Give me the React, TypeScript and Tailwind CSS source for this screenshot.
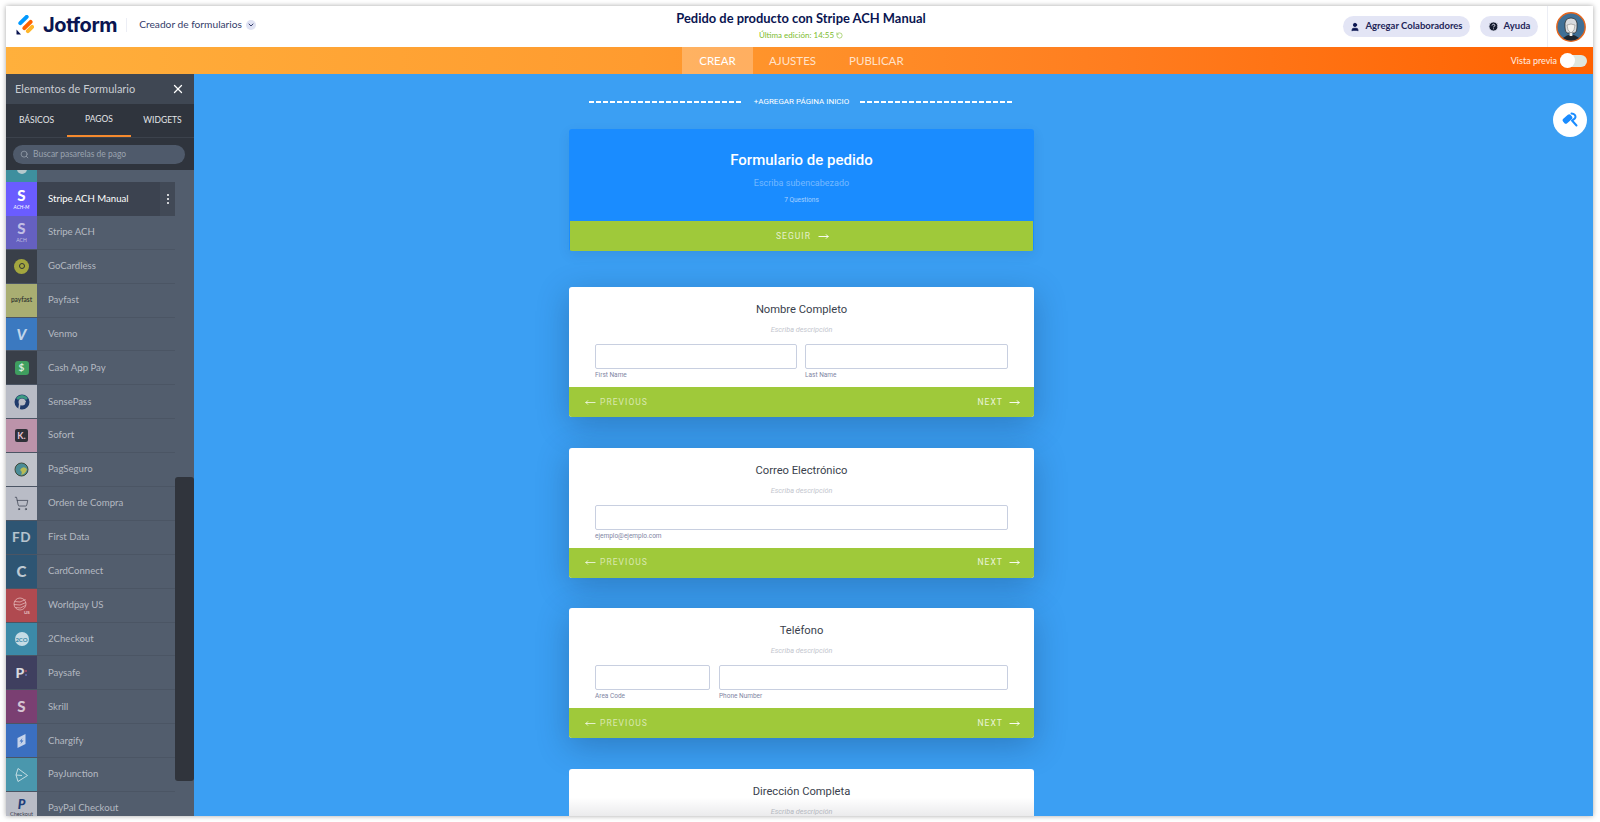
import React from "react";
import { ChevronDown, CircleHelp, MoveLeft, MoveRight, RotateCcw, Search, ShoppingCart, User, X } from "lucide-react";

const headerFont = "font-['Lato','Noto_Sans',sans-serif]";

function Logo() {
  return (
    <svg width="18" height="20" viewBox="0 0 18 20" aria-hidden>
      <rect x="5.5" y="-1.5" width="4" height="13" rx="2" transform="rotate(45 7.5 5)" fill="#0099ff" />
      <rect x="9.5" y="3.5" width="4" height="13" rx="2" transform="rotate(45 11.5 10)" fill="#ff6100" />
      <rect x="12" y="9" width="4" height="10" rx="2" transform="rotate(45 14 14)" fill="#ffb629" />
      <path d="M0.5 14.5 L0.5 19 Q0.5 19.5 1 19.5 L5 19.5 Z" fill="#0a1551" />
    </svg>
  );
}

function Avatar() {
  return (
    <svg width="30" height="30" viewBox="0 0 30 30" aria-hidden>
      <circle cx="15" cy="15" r="14.2" fill="#3f6f96" stroke="#e8651a" strokeWidth="1.4" />
      <path d="M7 26 Q15 19 23 26 Q15 31 7 26Z" fill="#1d2630" />
      <path d="M9 15 Q8 6 15 6 Q22 6 21 15 Q21 20 19 21 L11 21 Q9 20 9 15Z" fill="#d8dade" stroke="#222" strokeWidth="0.7" />
      <path d="M11 13 Q11 19 15 21 Q19 19 19 13 Q15 11 11 13Z" fill="#f3f1ee" stroke="#555" strokeWidth="0.4" />
      <rect x="13.6" y="21" width="2.8" height="3" fill="#efeeea" />
    </svg>
  );
}

function Roller() {
  return (
    <svg width="18" height="18" viewBox="0 0 18 18" aria-hidden>
      <rect x="1.5" y="5" width="10" height="6" rx="2" transform="rotate(-40 6.5 8)" fill="#1a8cff" />
      <path d="M10.5 2.5 Q14.5 3 14.5 6 Q14.5 7.5 11 9.5 L15.5 14.5" fill="none" stroke="#1a8cff" strokeWidth="2" strokeLinecap="round" strokeLinejoin="round" />
    </svg>
  );
}

function Letter({ text, className = "text-white/70" }: { text: string; className?: string }) {
  return <span className={`font-['Lato',sans-serif] font-black leading-none ${className}`}>{text}</span>;
}

function Ring({ className }: { className: string }) {
  return <span className={`block rounded-full ${className}`} />;
}

const gateways: { name: string; bg: string; icon: React.ReactNode }[] = [
  {
    name: "Stripe ACH",
    bg: "bg-[#6560c0]",
    icon: (
      <span className="flex flex-col items-center gap-[1px]">
        <Letter text="S" className="text-[15px] text-white/60" />
        <span className="text-[5px] leading-[6px] text-white/60 font-['Lato',sans-serif]">ACH</span>
      </span>
    ),
  },
  {
    name: "GoCardless",
    bg: "bg-[#393f49]",
    icon: (
      <span className="flex h-[15px] w-[15px] items-center justify-center rounded-full bg-[#a3a63f]">
        <Ring className="h-[6px] w-[6px] border border-[#30343a]" />
      </span>
    ),
  },
  {
    name: "Payfast",
    bg: "bg-[#a9ae72]",
    icon: <span className="font-['Lato',sans-serif] text-[6.5px] font-bold text-[#3b3f35]">payfast</span>,
  },
  {
    name: "Venmo",
    bg: "bg-[#3b79c0]",
    icon: <Letter text="V" className="text-[15px] italic text-white/70" />,
  },
  {
    name: "Cash App Pay",
    bg: "bg-[#393f49]",
    icon: (
      <span className="flex h-[14px] w-[14px] items-center justify-center rounded-[3px] bg-[#3f9e5f] font-['Lato',sans-serif] text-[10px] font-bold text-white/80">
        $
      </span>
    ),
  },
  {
    name: "SensePass",
    bg: "bg-[#b9bcc6]",
    icon: (
      <svg width="16" height="16" viewBox="0 0 16 16" fill="none" aria-hidden>
        <circle cx="8" cy="8" r="5.5" stroke="#1f3a6b" strokeWidth="4" />
        <path d="M3 5 Q8 0 13 5" stroke="#3c9a82" strokeWidth="2.6" />
        <path d="M6.5 6 L5 15" stroke="#b9bcc6" strokeWidth="1.6" />
        <path d="M9.5 6 L11.5 8" stroke="#b9bcc6" strokeWidth="1.6" />
      </svg>
    ),
  },
  {
    name: "Sofort",
    bg: "bg-[#bc93aa]",
    icon: (
      <span className="flex h-[13px] w-[13px] items-center justify-center rounded-[2px] bg-[#2f3038] font-['Lato',sans-serif] text-[9px] font-bold text-[#e3c3d3]">
        K.
      </span>
    ),
  },
  {
    name: "PagSeguro",
    bg: "bg-[#c0c3cb]",
    icon: (
      <svg width="15" height="15" viewBox="0 0 15 15" aria-hidden>
        <circle cx="7.5" cy="7.5" r="6.5" fill="#4b8c96" stroke="#3d4a3a" strokeWidth="1" />
        <path d="M6 8 Q9 3 13 7 Q12 12 7 13 Q9 10 6 8Z" fill="#b7bb55" />
      </svg>
    ),
  },
  {
    name: "Orden de Compra",
    bg: "bg-[#b9bcc6]",
    icon: <ShoppingCart size={15} strokeWidth={1.2} className="text-[#3b4250]" />,
  },
  { name: "First Data", bg: "bg-[#2e5573]", icon: <span className="font-['Lato',sans-serif] text-[13.5px] font-bold leading-none tracking-[0.5px] text-white/65">FD</span> },
  { name: "CardConnect", bg: "bg-[#2e5573]", icon: <Letter text="C" className="text-[15px] text-white/70" /> },
  {
    name: "Worldpay US",
    bg: "bg-[#b04a50]",
    icon: (
      <svg width="19" height="19" viewBox="0 0 19 19" fill="none" stroke="#e9c6c6" strokeWidth="0.7" aria-hidden>
        <circle cx="8" cy="8" r="6" />
        <path d="M2.5 5.5 Q8 7.5 13.5 3.5 M2 8.5 Q8 10.5 14 6.5 M3.5 11.5 Q8 13.5 13.5 9.5" />
        <text x="12" y="18" fontSize="4.5" fontWeight="700" fill="#e9c6c6" stroke="none">US</text>
      </svg>
    ),
  },
  {
    name: "2Checkout",
    bg: "bg-[#3c8aa8]",
    icon: (
      <span className="flex h-[14px] w-[14px] items-center justify-center rounded-full bg-white/70 font-['Lato',sans-serif] text-[6px] font-bold text-[#3c8aa8]">
        2CO
      </span>
    ),
  },
  {
    name: "Paysafe",
    bg: "bg-[#3f3f5f]",
    icon: (
      <span className="flex items-center gap-[1px]">
        <Letter text="P" className="text-[14px] text-white/80" />
        <span className="flex flex-col gap-[2px]">
          <Ring className="h-[2px] w-[2px] bg-[#b0506a]" />
          <Ring className="h-[2px] w-[2px] bg-[#6a70b0]" />
        </span>
      </span>
    ),
  },
  { name: "Skrill", bg: "bg-[#7a3f72]", icon: <Letter text="S" className="text-[15px] text-white/70" /> },
  {
    name: "Chargify",
    bg: "bg-[#3b6fc0]",
    icon: (
      <svg width="9" height="14" viewBox="0 0 9 14" aria-hidden>
        <path d="M0.5 4 L8.5 0 L8.5 10 L0.5 14Z" fill="#c5d3ea" />
        <path d="M5.5 4 L2.5 7.5 L4.5 7.5 L3.5 10 L6.5 6.5 L4.5 6.5Z" fill="#3b6fc0" />
      </svg>
    ),
  },
  {
    name: "PayJunction",
    bg: "bg-[#4a97ad]",
    icon: (
      <svg width="15" height="16" viewBox="0 0 15 16" fill="none" stroke="#cfe3e8" strokeWidth="0.9" aria-hidden>
        <path d="M2 8 L4 1.5 L13.5 8.5 L4 14.5 L2 8 L8 8.5" strokeLinejoin="round" />
      </svg>
    ),
  },
  {
    name: "PayPal Checkout",
    bg: "bg-[#b9bcc6]",
    icon: (
      <span className="flex flex-col items-center">
        <span className="font-['Lato',sans-serif] text-[13px] font-black italic leading-none text-[#1f3f7a]">P</span>
        <span className="font-['Lato',sans-serif] text-[5.5px] leading-[7px] text-[#3b4250]">Checkout</span>
      </span>
    ),
  },
];

function GatewayRow({ name, bg, icon }: { name: string; bg: string; icon: React.ReactNode }) {
  return (
    <div className="flex h-[33.9px] shrink-0 items-center border-b border-[#4b5564]">
      <div className={`flex h-full w-[31px] shrink-0 items-center justify-center overflow-hidden ${bg}`}>{icon}</div>
      <span className={`pl-[11px] text-[9.6px] text-[#b4b9c1] ${headerFont}`}>{name}</span>
    </div>
  );
}

function Sidebar() {
  return (
    <aside className={`flex h-full w-[188px] shrink-0 flex-col overflow-hidden bg-[#525d6d] ${headerFont}`}>
      <div className="flex h-[30px] shrink-0 items-center justify-between bg-[#3f4753] pl-[9px] pr-[9px]">
        <span className="text-[11px] text-[#c9ccd2]">Elementos de Formulario</span>
        <X size={14} strokeWidth={2.2} className="text-white" />
      </div>
      <div className="flex h-[34px] shrink-0 border-b border-[#3c424c] bg-[#2f343d] text-[8.5px] text-[#e3e5e8]">
        <div className="flex w-[61px] items-center justify-center">BÁSICOS</div>
        <div className="flex w-[64px] items-center justify-center border-b-2 border-[#f58a2e]">PAGOS</div>
        <div className="flex flex-1 items-center justify-center">WIDGETS</div>
      </div>
      <div className="flex h-[32px] shrink-0 items-center bg-[#2f343d] px-[7px]">
        <div className="flex h-[19px] w-[172px] items-center gap-[4px] rounded-full bg-[#4f5a6b] pl-[7px] text-[8.5px] text-[#9aa3af]">
          <Search size={9} />
          Buscar pasarelas de pago
        </div>
      </div>
      <div className="flex min-h-0 flex-1">
        <div className="flex w-[169px] shrink-0 flex-col overflow-hidden">
          <div className="flex h-[12px] shrink-0 items-end justify-start bg-[#525d6d]">
            <div className="flex h-full w-[31px] items-start justify-center overflow-hidden bg-[#3e8f9e]">
              <Ring className="h-[5px] w-[10px] -translate-y-[1px] rounded-t-none bg-[#b5c9cd]" />
            </div>
          </div>
          <div className="flex h-[33.9px] shrink-0 items-center bg-[#3c4350]">
            <div className="flex h-full w-[31px] shrink-0 flex-col items-center justify-center gap-[1px] bg-[#6a5cff]">
              <Letter text="S" className="text-[15px] text-white" />
              <span className="font-['Lato',sans-serif] text-[5px] italic leading-[6px] text-white">ACH-M</span>
            </div>
            <span className="flex-1 pl-[11px] text-[9.6px] text-white">Stripe ACH Manual</span>
            <div className="flex h-full w-[15px] flex-col items-center justify-center gap-[2px] bg-[#414956]">
              <Ring className="h-[2px] w-[2px] bg-white" />
              <Ring className="h-[2px] w-[2px] bg-white" />
              <Ring className="h-[2px] w-[2px] bg-white" />
            </div>
          </div>
          {gateways.map((gateway) => (
            <GatewayRow key={gateway.name} {...gateway} />
          ))}
        </div>
        <div className="flex-1 pt-[307px]">
          <div className="h-[304px] rounded-[3px] bg-[#30343c]" />
        </div>
      </div>
    </aside>
  );
}

function NavBar() {
  return (
    <div className="flex h-[30px] shrink-0 items-center justify-between bg-[#9fc93a] pl-[16px] pr-[14px] font-['Roboto',sans-serif] text-[8.5px] tracking-[1.05px]">
      <span className="flex items-center gap-[4px] text-white/60">
        <MoveLeft size={11} className="text-white/80" />
        PREVIOUS
      </span>
      <span className="flex items-center gap-[6px] text-white/80">
        NEXT
        <MoveRight size={11} className="text-white" />
      </span>
    </div>
  );
}

function Field({ label, className }: { label: string; className: string }) {
  return (
    <div className={className}>
      <div className="h-[25px] rounded-[2px] border border-[#c8cfe0] bg-white" />
      <div className="pt-[2px] text-[6.5px] leading-[9px] text-[#7f86a3]">{label}</div>
    </div>
  );
}

function QuestionCard({ title, children }: { title: string; children: React.ReactNode }) {
  return (
    <section className="mb-[30.5px] flex h-[130px] w-[465px] shrink-0 flex-col overflow-hidden rounded-[3px] bg-white font-['Roboto',sans-serif] shadow-[0_8px_32px_rgba(20,50,90,0.32)]">
      <div className="h-[100px] shrink-0 px-[26px] pt-[15px]">
        <h2 className="text-center text-[11.2px] leading-[16px] text-[#3a3f4d]">{title}</h2>
        <p className="pt-[6px] text-center text-[7.3px] italic leading-[11px] text-[#c3c6ce]">Escriba descripción</p>
        <div className="flex gap-[8px] pt-[9px]">{children}</div>
      </div>
      <NavBar />
    </section>
  );
}

export default function App() {
  return (
    <div className="h-[822px] w-[1600px] overflow-hidden bg-white pb-[6px] pl-[6px] pr-[7px] pt-[6px]">
      <div className="flex h-full flex-col overflow-hidden shadow-[0_0_5px_rgba(0,0,0,0.35)]">
        <header className={`flex h-[41px] shrink-0 items-center bg-white ${headerFont}`}>
          <div className="flex w-[420px] items-center pb-[3px]">
            <div className="ml-[10px]">
              <Logo />
            </div>
            <span className="ml-[9px] font-['Inter',sans-serif] text-[20px] font-bold tracking-[-0.4px] text-[#0a1551]">Jotform</span>
            <div className="ml-[9px] h-[14px] w-px bg-[#eceef5]" />
            <span className="ml-[12px] text-[10.2px] text-[#343c6a]">Creador de formularios</span>
            <span className="ml-[4px] flex h-[10px] w-[10px] items-center justify-center rounded-full bg-[#dfe2f3]">
              <ChevronDown size={8} strokeWidth={3} className="text-[#343c6a]" />
            </span>
          </div>
          <div className="flex flex-1 flex-col items-center pb-[3px] pr-[167px]">
            <span className="text-[12.9px] font-bold leading-[18px] text-[#0a1551]">Pedido de producto con Stripe ACH Manual</span>
            <span className="flex items-center gap-[2px] pt-[2px] text-[8px] leading-[12px] text-[#7dbb2d]">
              Última edición: 14:55
              <RotateCcw size={7} strokeWidth={2} />
            </span>
          </div>
          <div className="flex items-center">
            <div className="flex h-[21px] w-[127px] items-center justify-center gap-[5px] rounded-full bg-[#e3e5f5] text-[9.5px] font-bold text-[#1f2659]">
              <User size={10} fill="#0a1551" className="text-[#0a1551]" />
              Agregar Colaboradores
            </div>
            <div className="ml-[10px] flex h-[21px] w-[58px] items-center justify-center gap-[5px] rounded-full bg-[#e3e5f5] text-[9.5px] font-bold text-[#1f2659]">
              <CircleHelp size={11} fill="#161c2f" className="text-[#e3e5f5]" />
              Ayuda
            </div>
            <div className="ml-[9px] flex h-[41px] w-[46px] items-center justify-center border-l border-[#eceef5]">
              <Avatar />
            </div>
          </div>
        </header>

        <nav className={`flex h-[27px] shrink-0 items-stretch bg-[linear-gradient(90deg,#ffb03c_0%,#ff9b2f_40%,#ff7d1f_70%,#ff6100_100%)] ${headerFont}`}>
          <div className="ml-[676px] flex w-[71px] items-center justify-center bg-white/25 text-[11.5px] text-white">CREAR</div>
          <div className="ml-[16px] flex items-center text-[11.5px] text-white/75">AJUSTES</div>
          <div className="ml-[33px] flex items-center text-[11.5px] text-white/75">PUBLICAR</div>
          <div className="ml-auto flex items-center pr-[6px]">
            <span className="pr-[3px] text-[9px] text-white/90">Vista previa</span>
            <div className="flex h-[12px] w-[27px] items-center rounded-full bg-[#dfe6df]">
              <span className="h-[15px] w-[15px] rounded-full bg-white" />
            </div>
          </div>
        </nav>

        <div className="relative flex min-h-0 flex-1">
          <Sidebar />
          <main className="flex min-w-0 flex-1 flex-col overflow-hidden bg-[#3b9ff3] pl-[375px] pt-[20px]">
            <div className="mb-[19px] flex w-[465px] shrink-0 items-center px-[20px] font-['Roboto',sans-serif] text-[8px] leading-[16px] text-white">
              <div className="h-[1.5px] flex-1 bg-[repeating-linear-gradient(90deg,#ffffff_0,#ffffff_5px,transparent_5px,transparent_7px)]" />
              <span className="px-[11px]">+AGREGAR PÁGINA INICIO</span>
              <div className="h-[1.5px] flex-1 bg-[repeating-linear-gradient(90deg,#ffffff_0,#ffffff_5px,transparent_5px,transparent_7px)]" />
            </div>

            <section className="mb-[36px] flex h-[122px] w-[465px] shrink-0 flex-col overflow-hidden rounded-[3px] bg-[#1a8cff] font-['Roboto',sans-serif] shadow-[0_4px_12px_rgba(20,50,90,0.1)]">
              <div className="flex h-[92px] shrink-0 flex-col items-center pt-[21px]">
                <h1 className="text-[15px] font-medium leading-[20px] text-white">Formulario de pedido</h1>
                <p className="pt-[7px] text-[9px] leading-[12px] text-white/40">Escriba subencabezado</p>
                <p className="pt-[7px] text-[6.5px] leading-[9px] text-white/60">7 Questions</p>
              </div>
              <div className="mx-px flex h-[30px] shrink-0 items-center justify-center gap-[7px] bg-[#9fc93a] pl-[2px] text-[8.5px] tracking-[1.05px] text-white/75">
                SEGUIR
                <MoveRight size={11} className="text-white" />
              </div>
            </section>

            <QuestionCard title="Nombre Completo">
              <Field label="First Name" className="w-[202px]" />
              <Field label="Last Name" className="w-[203px]" />
            </QuestionCard>
            <QuestionCard title="Correo Electrónico">
              <Field label="ejemplo@ejemplo.com" className="w-[413px]" />
            </QuestionCard>
            <QuestionCard title="Teléfono">
              <Field label="Area Code" className="w-[115px]" />
              <Field label="Phone Number" className="ml-[1px] w-[289px]" />
            </QuestionCard>

            <section className="h-[130px] w-[465px] shrink-0 rounded-[3px] bg-[linear-gradient(180deg,#ffffff_0%,#ffffff_22%,#e8e8ea_38%)] pt-[15px] font-['Roboto',sans-serif]">
              <h2 className="text-center text-[11.2px] leading-[16px] text-[#3a3f4d]">Dirección Completa</h2>
              <p className="pt-[6px] text-center text-[7.3px] italic leading-[11px] text-[#b5b8c0]">Escriba descripción</p>
            </section>
          </main>
          <button type="button" className="absolute right-[6px] top-[29px] flex h-[34px] w-[34px] items-center justify-center rounded-full bg-white">
            <Roller />
          </button>
        </div>
      </div>
    </div>
  );
}
